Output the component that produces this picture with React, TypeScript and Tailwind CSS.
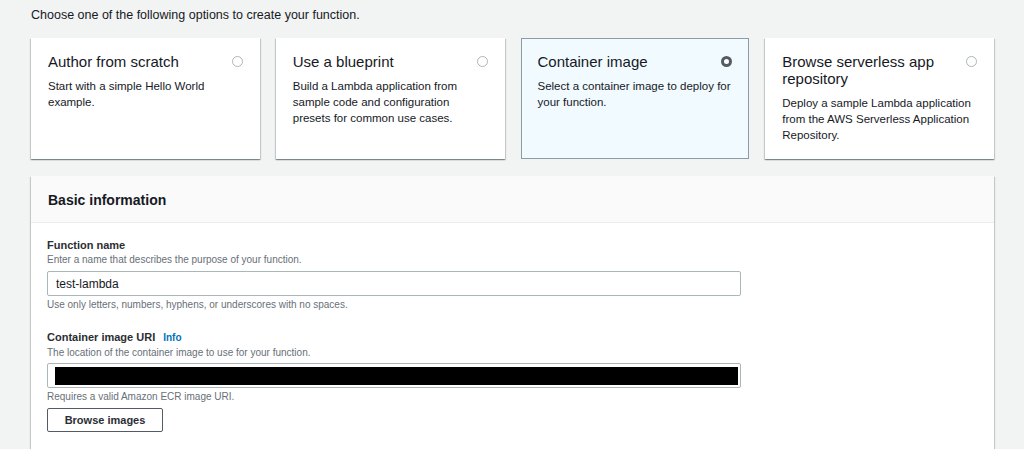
import * as React from "react"

const tiles = [
  {
    title: "Author from scratch",
    desc: "Start with a simple Hello World example.",
  },
  {
    title: "Use a blueprint",
    desc: "Build a Lambda application from sample code and configuration presets for common use cases.",
  },
  {
    title: "Container image",
    desc: "Select a container image to deploy for your function.",
    selected: true,
  },
  {
    title: "Browse serverless app repository",
    desc: "Deploy a sample Lambda application from the AWS Serverless Application Repository.",
  },
]

function Tile({ title, desc, selected }: { title: string; desc: string; selected?: boolean }) {
  return (
    <div
      className={
        selected
          ? "h-[121px] border border-[#8d9ba6] bg-[#f1faff] pl-[16px] pr-[12px] pt-[14px]"
          : "h-[121px] bg-white pl-[17px] pr-[16px] pt-[15px] shadow-[0_1px_1px_0_rgba(0,28,36,0.3),1px_1px_1px_0_rgba(0,28,36,0.15),-1px_1px_1px_0_rgba(0,28,36,0.15)]"
      }
    >
      <div className={selected ? "flex items-start justify-between pr-[4px]" : "flex items-start justify-between pr-[1px]"}>
        <div className="pr-3 text-[15px] leading-[17px] text-[#16191f]">{title}</div>
        <div
          className={
            selected
              ? "mt-[3px] h-[11px] w-[11px] shrink-0 rounded-full border-[3px] border-[#545b64] bg-white"
              : "mt-[3px] h-[11px] w-[11px] shrink-0 rounded-full border border-[#aab7b8] bg-white"
          }
        />
      </div>
      <div className="mt-[8px] text-[11.5px] leading-[16px] text-[#16191f]">{desc}</div>
    </div>
  )
}

export default function App() {
  return (
    <div className="h-[449px] overflow-hidden bg-[#f2f3f3] pl-[31px] pr-[30px] pt-[7px] font-['Liberation_Sans',Arial,sans-serif] text-[#16191f]">
      <p className="text-[12.5px] leading-[16px]">Choose one of the following options to create your function.</p>

      <div className="mt-[15px] grid grid-cols-4 gap-x-[16px]">
        {tiles.map((t) => (
          <Tile key={t.title} {...t} />
        ))}
      </div>

      <div className="mt-[17px] bg-white shadow-[0_1px_1px_0_rgba(0,28,36,0.3),1px_1px_1px_0_rgba(0,28,36,0.15),-1px_1px_1px_0_rgba(0,28,36,0.15)]">
        <div className="border-b border-[#eaeded] bg-[#fafafa] px-[17px] pb-[13px] pt-[15px]">
          <h2 className="text-[14px] font-bold leading-[18px]">Basic information</h2>
        </div>

        <div className="px-[16px] pb-[20px] pt-[14px]">
          <label className="block text-[11px] font-bold leading-[16px] text-[#2a2e33]">Function name</label>
          <div className="text-[10px] leading-[14px] text-[#687078]">
            Enter a name that describes the purpose of your function.
          </div>
          <div className="mt-[4px] flex h-[25px] w-[694px] items-center rounded-[2px] border border-[#aab7b8] px-[8px] text-[12px]">
            test-lambda
          </div>
          <div className="mt-[2px] text-[10px] leading-[14px] text-[#687078]">
            Use only letters, numbers, hyphens, or underscores with no spaces.
          </div>

          <label className="mt-[17px] flex items-baseline gap-[8px] text-[11px] font-bold leading-[16px] text-[#2a2e33]">
            Container image URI
            <span className="text-[10px] font-bold text-[#0073bb]">Info</span>
          </label>
          <div className="text-[10px] leading-[14px] text-[#687078]">
            The location of the container image to use for your function.
          </div>
          <div className="mt-[3px] flex h-[25px] w-[694px] items-center rounded-[2px] border border-[#aab7b8] pl-[7px] pr-[2px]">
            <div className="h-[18px] flex-1 bg-black" />
          </div>
          <div className="mt-[2px] text-[10px] leading-[14px] text-[#687078]">
            Requires a valid Amazon ECR image URI.
          </div>
          <button className="mt-[4px] h-[24px] w-[116px] rounded-[2px] border border-[#545b64] bg-white text-[11px] font-bold text-[#2a2e33]">
            Browse images
          </button>
        </div>
      </div>
    </div>
  )
}
